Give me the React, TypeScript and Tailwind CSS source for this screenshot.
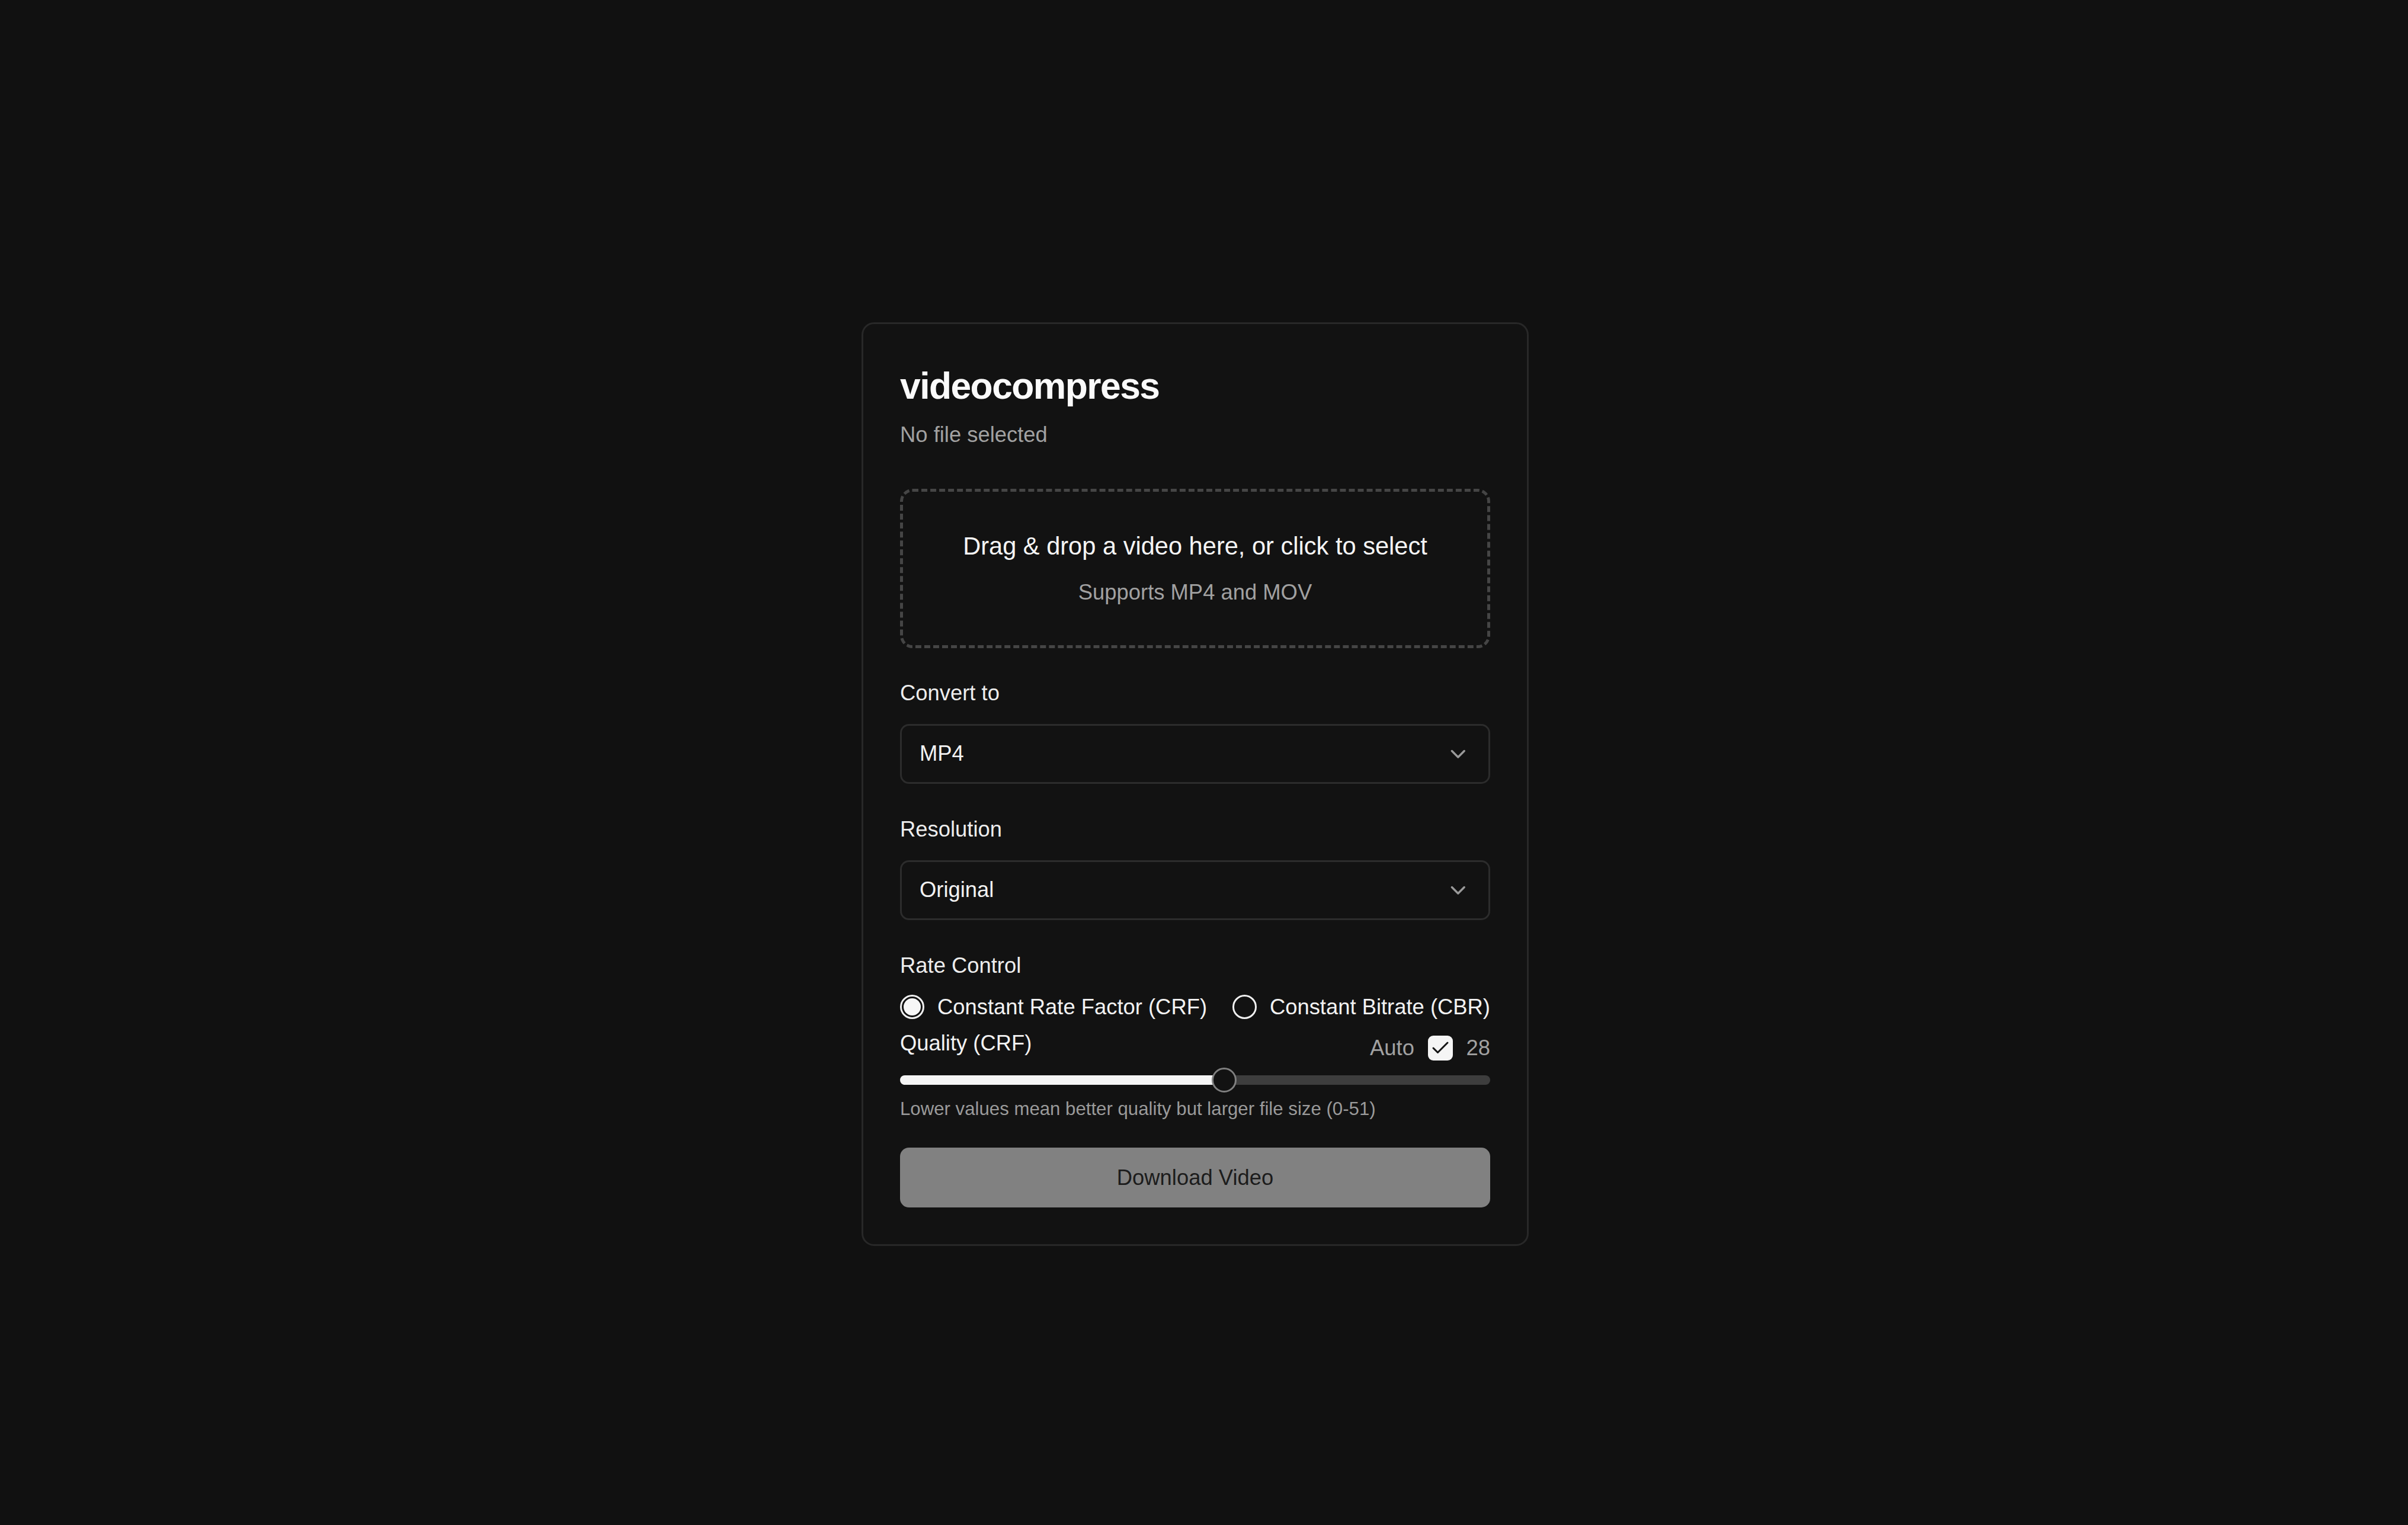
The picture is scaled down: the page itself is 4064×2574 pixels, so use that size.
import { ChevronDown, Check } from 'lucide-react';

const QUALITY = 28;
const QUALITY_MAX = 51;

function SelectBox({ value }: { value: string }) {
  return (
    <div className="mt-[26px] flex h-[101px] items-center justify-between rounded-[15px] border-[3px] border-[#2c2c2c] bg-[#121212] px-[30px]">
      <span className="text-[36.4px] leading-[52px] text-[#f2f2f2]">{value}</span>
      <ChevronDown className="h-[41.6px] w-[41.6px] text-[#9a9a9a]" />
    </div>
  );
}

function Radio({ label, checked }: { label: string; checked?: boolean }) {
  return (
    <label className="flex items-center gap-[22px]">
      <span className="flex h-[41px] w-[41px] items-center justify-center rounded-full border-[3px] border-[#f0f0f0]">
        {checked && <span className="h-[29px] w-[29px] rounded-full bg-[#f7f7f7]" />}
      </span>
      <span className="text-[36.4px] leading-[52px] text-[#f2f2f2]">{label}</span>
    </label>
  );
}

export default function App() {
  const pct = (QUALITY / QUALITY_MAX) * 100;

  return (
    <div className="min-h-screen bg-[#111111] flex justify-center items-start pt-[544px] pr-[30px] font-['Liberation_Sans',Arial,sans-serif]">
      <div className="w-[1126px] rounded-[21px] border-[3px] border-[#282828] bg-[#121212] px-[62px] pt-[63px] pb-[62px]">
        {/* Header */}
        <h1 className="text-[62.4px] leading-[83.2px] font-bold tracking-[-1.56px] text-[#fafafa]">
          videocompress
        </h1>
        <p className="mt-[15px] text-[36.4px] leading-[52px] text-[#a1a1a1]">No file selected</p>

        {/* Drop zone */}
        <div className="mt-[64.5px] rounded-[21px] border-[5px] border-dashed border-[#454545] pt-[61.5px] pb-[62.4px] text-center">
          <p className="text-[41.6px] leading-[62.4px] text-[#f5f5f5]">
            Drag &amp; drop a video here, or click to select
          </p>
          <p className="mt-[20.8px] text-[36.4px] leading-[52px] text-[#a1a1a1]">Supports MP4 and MOV</p>
        </div>

        {/* Convert to */}
        <div className="mt-[50px]">
          <div className="text-[36.4px] leading-[52px] text-[#ededed]">Convert to</div>
          <SelectBox value="MP4" />
        </div>

        {/* Resolution */}
        <div className="mt-[51px]">
          <div className="text-[36.4px] leading-[52px] text-[#ededed]">Resolution</div>
          <SelectBox value="Original" />
        </div>

        {/* Rate control */}
        <div className="mt-[51px]">
          <div className="text-[36.4px] leading-[52px] text-[#ededed]">Rate Control</div>
          <div className="mt-[18px] flex h-[52px] items-center justify-between">
            <Radio label="Constant Rate Factor (CRF)" checked />
            <Radio label="Constant Bitrate (CBR)" />
          </div>

          <div className="mt-[9px] flex items-start justify-between">
            <span className="text-[36.4px] leading-[52px] text-[#f2f2f2]">Quality (CRF)</span>
            <div className="mt-[8px] flex h-[52px] items-center gap-[23px] text-[36.4px] leading-[52px] text-[#a1a1a1]">
              <span>Auto</span>
              <span className="flex h-[41.6px] w-[41.6px] items-center justify-center rounded-[9px] bg-[#f5f5f5]">
                <Check className="h-[36px] w-[36px] text-[#141414]" strokeWidth={2} />
              </span>
              <span>{QUALITY}</span>
            </div>
          </div>

          {/* Slider */}
          <div className="relative mt-[7.5px] flex h-[41.6px] items-center">
            <div className="h-[15.6px] w-full overflow-hidden rounded-full bg-[#3d3d3d]">
              <div className="h-full bg-[#f5f5f5]" style={{ width: `${pct}%` }} />
            </div>
            <div
              className="absolute top-0 h-[41.6px] w-[41.6px] rounded-full border-[3px] border-[#7f7f7f] bg-[#121212]"
              style={{ left: `calc(${pct}% - 20.8px)` }}
            />
          </div>
          <p className="mt-[7.6px] text-[31.2px] leading-[41.6px] text-[#9a9a9a]">
            Lower values mean better quality but larger file size (0-51)
          </p>
        </div>

        {/* Download */}
        <button
          disabled
          className="mt-[44px] flex h-[101px] w-full items-center justify-center rounded-[15px] bg-[#818181] text-[36.4px] leading-[52px] text-[#1c1c1c]"
        >
          Download Video
        </button>
      </div>
    </div>
  );
}
